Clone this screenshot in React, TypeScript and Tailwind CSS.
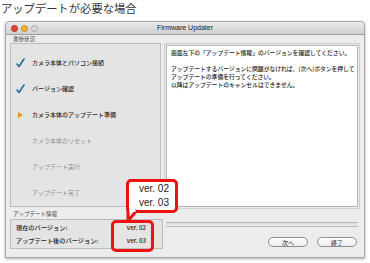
import React from "react";

const Check = () => (
  <svg width="9" height="10" viewBox="0 0 9 10" className="shrink-0">
    <path d="M1 6 L3 8.5 L8 1" fill="none" stroke="#1d6f97" strokeWidth="1.6" strokeLinecap="round" strokeLinejoin="round" />
  </svg>
);

const Tri = () => (
  <svg width="9" height="10" viewBox="0 0 9 10" className="shrink-0">
    <path d="M2 2 L7 5 L2 8 Z" fill="#f2921e" />
  </svg>
);

type Step = { label: string; state: "done" | "current" | "todo" };
const steps: Step[] = [
  { label: "カメラ本体とパソコン接続", state: "done" },
  { label: "バージョン確認", state: "done" },
  { label: "カメラ本体のアップデート準備", state: "current" },
  { label: "カメラ本体のリセット", state: "todo" },
  { label: "アップデート実行", state: "todo" },
  { label: "アップデート完了", state: "todo" },
];

export default function App() {
  return (
    <div
      className="relative w-[370px] h-[263px] overflow-hidden bg-white"
      style={{ fontFamily: '"Noto Sans CJK JP", "Noto Sans", sans-serif' }}
    >
      <div className="h-[18px] pl-[1px] text-[11.3px] leading-[17px] text-[#333]">アップデートが必要な場合</div>
      <div className="ml-[5px] mt-[3px] w-[360px] h-[237px] rounded-t-[4px] border border-[#a8a8a8] bg-[#ececec] shadow-[0_1px_3px_rgba(0,0,0,0.35)] flex flex-col">
        {/* title bar */}
        <div className="h-[13px] rounded-t-[4px] bg-gradient-to-b from-[#eaeaea] to-[#cfcfcf] border-b border-[#a0a0a0] flex items-center relative">
          <div className="flex gap-[3px] pl-[5px]">
            <span className="w-[7px] h-[7px] rounded-full bg-[#e4453a] border border-[#b0302a]" />
            <span className="w-[7px] h-[7px] rounded-full bg-[#f3b636] border border-[#c08a20]" />
            <span className="w-[7px] h-[7px] rounded-full bg-[#d8d8d8] border border-[#a8a8a8]" />
          </div>
          <div className="absolute inset-0 flex items-center justify-center text-[7px] text-[#222]" style={{ fontFamily: '"Liberation Sans", sans-serif' }}>
            Firmware Updater
          </div>
        </div>
        {/* body */}
        <div className="flex-1 flex flex-col px-[4px]">
          <div className="h-[8px] pt-[1px] text-[5.5px] leading-[7px] text-[#444] pl-[3px]">進捗状況</div>
          <div className="flex gap-[3px] h-[165px]">
            <div className="w-[153px] h-[164px] border border-[#bdbdbd] bg-[#e4e4e4] flex flex-col pt-[6px]">
              {steps.map((s) => (
                <div key={s.label} className="h-[26.6px] flex items-center pl-[5px] gap-[7px]">
                  <span className="w-[9px] flex justify-center">
                    {s.state === "done" ? <Check /> : s.state === "current" ? <Tri /> : null}
                  </span>
                  <span
                    className={
                      "text-[6px] leading-[8px] " +
                      (s.state === "todo" ? "text-[#8e8e8e]" : "text-[#1e1e1e] font-medium")
                    }
                  >
                    {s.label}
                  </span>
                </div>
              ))}
            </div>
            <div className="w-[196px] h-[166px] border border-[#cfcfcf] bg-[#e9e9e9] p-[1px]">
              <div className="w-full h-full bg-white border border-[#b5b5b5] px-[4px] pt-[3px] text-[5.8px] leading-[8px] text-[#1e1e1e] font-medium whitespace-nowrap">
                <div>画面左下の「アップデート情報」のバージョンを確認してください。</div>
                <div className="h-[8px]" />
                <div>アップデートするバージョンに問題がなければ、[次へ]ボタンを押して</div>
                <div>アップデートの準備を行ってください。</div>
                <div>以降はアップデートのキャンセルはできません。</div>
              </div>
            </div>
          </div>
          <div className="flex gap-[3px] mt-[2px]">
            <div className="w-[153px] flex flex-col">
              <div className="h-[9px] text-[5.5px] leading-[9px] text-[#444] pl-[3px]">アップデート情報</div>
              <div className="h-[30px] border border-[#bdbdbd] bg-[#e4e4e4] flex flex-col justify-center gap-[5px] pl-[5px] pr-[16px] text-[6.2px] leading-[8px] text-[#1e1e1e] font-medium">
                <div className="flex justify-between"><span>現在のバージョン:</span><span>ver. 02</span></div>
                <div className="flex justify-between"><span>アップデート後のバージョン:</span><span>ver. 03</span></div>
              </div>
            </div>
            <div className="flex-1 flex flex-col pt-[12px]">
              <div className="h-[5px] mr-[2px] border-y border-[#b9b9b9] bg-gradient-to-b from-[#d8d8d8] to-[#f2f2f2]" />
              <div className="flex justify-end gap-[9px] mt-[10px] mr-[3px]">
                <div className="w-[40px] h-[10px] rounded-full border border-[#8f8f8f] bg-gradient-to-b from-white to-[#ececec] flex items-center justify-center text-[6px] text-[#222]">次へ</div>
                <div className="w-[40px] h-[10px] rounded-full border border-[#8f8f8f] bg-gradient-to-b from-white to-[#ececec] flex items-center justify-center text-[6px] text-[#222]">終了</div>
              </div>
            </div>
          </div>
        </div>
      </div>

      {/* callouts */}
      <div className="absolute left-[111px] top-[220px] w-[43px] h-[32px] rounded-[5px] border-[3px] border-[#ee1111]" />
      <div className="absolute left-[126px] top-[179px] w-[52px] h-[34px] rounded-[5px] border-[3px] border-[#ee1111] bg-white flex flex-col items-end justify-center pr-[6px] text-[10px] leading-[14px] text-[#222]" style={{ fontFamily: '"Liberation Sans", sans-serif' }}>
        <span>ver. 02</span>
        <span>ver. 03</span>
      </div>
      <svg className="absolute left-[124px] top-[209px]" width="16" height="14" viewBox="0 0 16 14">
        <path d="M4 0 L4 12 L13 1" fill="white" stroke="#ee1111" strokeWidth="3" strokeLinejoin="round" />
        <rect x="5.5" y="0" width="6" height="3" fill="white" />
      </svg>
    </div>
  );
}
